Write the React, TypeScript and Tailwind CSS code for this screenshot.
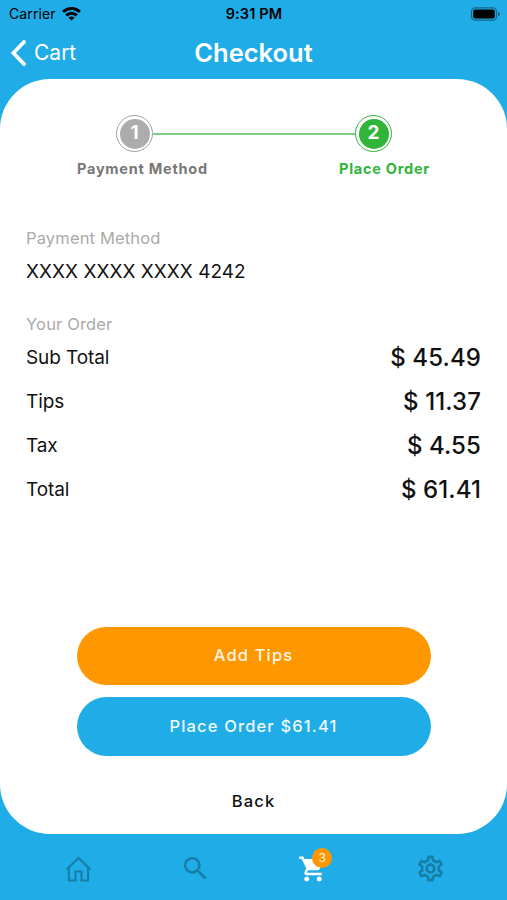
import { MdOutlineSettings, MdSearch, MdShoppingCart } from 'react-icons/md';

function StatusBar() {
  return (
    <div className="flex h-[27px] items-center justify-between pr-[6px] pl-[9px] text-black">
      <div className="flex w-[90px] items-center gap-[6px]">
        <span className="text-[14px] tracking-[0.1px]">Carrier</span>
        <svg className="h-[14px] w-[19px]" viewBox="0 0 19 14" fill="none" stroke="currentColor" strokeWidth="2.9">
          <path d="M1.1 4.9a12 12 0 0 1 16.8 0" />
          <path d="M4.2 8.4a7.6 7.6 0 0 1 10.6 0" />
          <path d="M9.5 13.6 6.4 10.8a4.4 4.4 0 0 1 6.2 0z" fill="currentColor" stroke="none" />
        </svg>
      </div>
      <span className="pt-px text-[14.5px] font-semibold tracking-[0.15px]">9:31 PM</span>
      <div className="flex w-[92px] justify-end">
        <svg className="h-[14px] w-[31px]" viewBox="0 0 31 14">
          <rect x="1.5" y="0.8" width="25" height="12.4" rx="3.8" fill="none" stroke="#126687" strokeWidth="1.2" />
          <rect x="3.2" y="2.6" width="21.6" height="8.8" rx="2" fill="#000" />
          <path d="M28 4.7v4.6c1.3-.5 2-1.3 2-2.3s-.7-1.8-2-2.3z" fill="#126687" />
        </svg>
      </div>
    </div>
  );
}

function Header() {
  return (
    <div className="grid h-[52px] grid-cols-[1fr_auto_1fr] items-center text-white">
      <button className="flex items-center gap-[8px] pl-[10px]">
        <svg className="h-[26px] w-[16px]" viewBox="0 0 16 26" fill="none" stroke="currentColor" strokeWidth="3.8" strokeLinecap="round" strokeLinejoin="miter">
          <path d="M14 2 3.4 13 14 24" />
        </svg>
        <span className="text-[21px] leading-[26px]">Cart</span>
      </button>
      <h1 className="text-[25.5px] leading-[30px] font-semibold">Checkout</h1>
    </div>
  );
}

function Stepper() {
  return (
    <div className="px-[77px] pt-[36px]">
      <div className="flex items-center pr-[38px] pl-[39px]">
        <div className="flex size-[37px] items-center justify-center rounded-full border border-[#a0a0a0]">
          <div className="flex size-[30px] items-center justify-center rounded-full bg-[#acacac] pb-[2px] text-[19px] leading-none font-bold text-white">1</div>
        </div>
        <div className="h-[2px] flex-1 bg-[#7bcd82]" />
        <div className="flex size-[37px] items-center justify-center rounded-full border border-[#30b53a]">
          <div className="flex size-[30px] items-center justify-center rounded-full bg-[#30b53a] pb-[2px] text-[19px] leading-none font-bold text-white">2</div>
        </div>
      </div>
      <div className="mt-[7px] flex justify-between text-[14.5px] leading-[20px] font-bold tracking-[0.75px]">
        <span className="text-[#777]">Payment Method</span>
        <span className="text-[#30b53a]">Place Order</span>
      </div>
    </div>
  );
}

const rows = [
  { label: 'Sub Total', value: '$ 45.49' },
  { label: 'Tips', value: '$ 11.37' },
  { label: 'Tax', value: '$ 4.55' },
  { label: 'Total', value: '$ 61.41' },
];

function Order() {
  return (
    <div className="px-[26px] pt-[48px]">
      <p className="text-[16.5px] leading-[22px] tracking-[0.15px] text-[#aaa]">Payment Method</p>
      <p className="mt-[11px] text-[19px] leading-[24px] tracking-[0.04px] text-[#111]">XXXX XXXX XXXX 4242</p>
      <p className="mt-[29px] text-[16.5px] leading-[22px] tracking-[0.15px] text-[#aaa]">Your Order</p>
      <div className="pt-px">
        {rows.map((row) => (
          <div key={row.label} className="flex h-[44px] items-center justify-between text-[#111]">
            <span className="text-[19px] tracking-[-0.1px]">{row.label}</span>
            <span className="text-[24px] font-medium tracking-[0.1px]">{row.value}</span>
          </div>
        ))}
      </div>
    </div>
  );
}

function TabBar() {
  return (
    <div className="grid h-[66px] grid-cols-4 items-center justify-items-center px-[19px] pt-[3px] text-[#157fa8]">
      <svg className="size-[26px]" viewBox="0 0 26 26" fill="none" stroke="currentColor" strokeWidth="2.1">
        <path d="M1.6 13.5 13.5 2l11.9 11.500M3.900 11.800V24.500h6.600v-9h6v9h6.600V11.800" />
      </svg>
      <MdSearch className="relative left-px size-[31px]" />
      <div className="relative left-px">
        <MdShoppingCart className="size-[30px] text-white" />
        <span className="absolute -top-[6px] left-[14px] flex size-[20px] items-center justify-center rounded-full bg-[#ff9800] text-[12px] leading-none text-[#fff0d5]">3</span>
      </div>
      <MdOutlineSettings className="relative left-px size-[31px]" />
    </div>
  );
}

export default function App() {
  return (
    <div className="flex h-[900px] w-[507px] flex-col overflow-hidden bg-[#20ade7] font-['Inter',sans-serif]">
      <StatusBar />
      <Header />
      <div className="flex h-[755px] flex-col rounded-[50px] bg-white">
        <Stepper />
        <Order />
        <div className="mt-auto flex flex-col items-center gap-[12px] pb-[21px] text-[16.5px] font-medium tracking-[1.15px]">
          <button className="h-[58.5px] w-[354px] rounded-full bg-[#ff9800] text-[#fff6e5]">Add Tips</button>
          <button className="h-[58.5px] w-[354px] rounded-full bg-[#20ade7] text-[#edf9ff]">Place Order $61.41</button>
          <button className="mt-[21.5px] leading-[24px] text-[#111]">Back</button>
        </div>
      </div>
      <TabBar />
    </div>
  );
}
